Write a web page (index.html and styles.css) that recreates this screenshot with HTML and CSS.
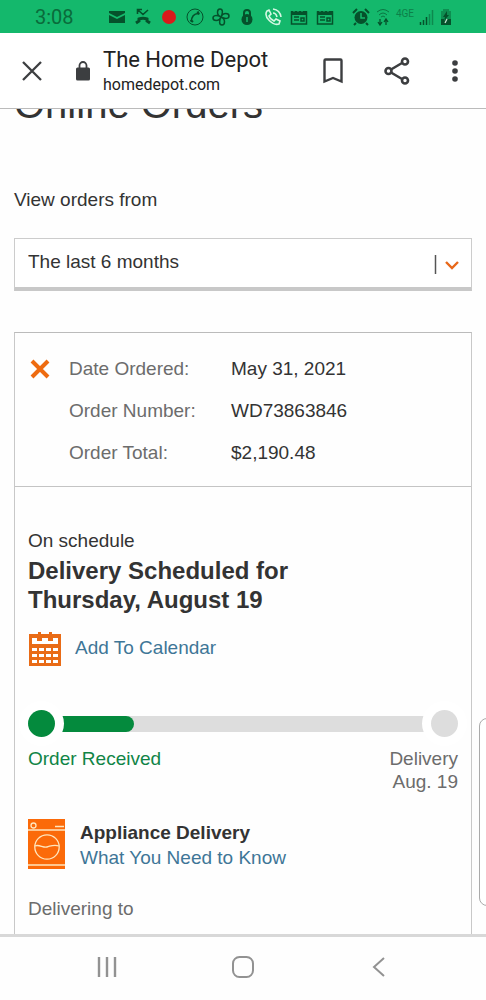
FILE: index.html
```html
<!DOCTYPE html>
<html lang="en">
<head>
<meta charset="utf-8">
<meta name="viewport" content="width=device-width, initial-scale=1">
<title>The Home Depot</title>
<link rel="stylesheet" href="styles.css">
</head>
<body>
<div class="phone">
  <div class="status">
    <time class="clock">3:08</time>
    <div class="tray">
      <svg width="18" height="18" viewBox="0 0 18 18"><path fill="currentColor" d="M1 3h16v2L9 9 1 5zM1 7l8 4 8-4v8H1z"/></svg>
      <svg width="18" height="18" viewBox="0 0 18 18" fill="none" stroke="currentColor"><path d="M14 2L9 6.500 4 2M3.500 6V1.500H8" stroke-width="1.600"/><path d="M2 15l3-2v-2q4-1.500 8 0v2l3 2" stroke-width="3"/></svg>
      <svg width="18" height="18" viewBox="0 0 18 18"><circle cx="9" cy="9" r="7" fill="#d91b1b"/></svg>
      <svg width="18" height="18" viewBox="0 0 18 18" fill="none" stroke="currentColor"><circle cx="9" cy="9" r="8"/><path d="M5.500 14C5 9 8 5 13 5.500" stroke-width="1.600"/><path d="M4.500 12l2.500 2M11.500 3.500l1.500 3" stroke-width="2.200"/></svg>
      <svg width="18" height="18" viewBox="0 0 18 18" fill="none" stroke="currentColor" stroke-width="1.500"><path d="M9 9C4 7 5 1 8 1s3 4 1 8M9 9c2-5 8-4 8-1s-4 3-8 1M9 9c5 2 4 8 1 8s-3-4-1-8M9 9c-2 5-8 4-8 1s4-3 8-1"/></svg>
      <svg width="18" height="18" viewBox="0 0 18 18"><path d="M6 9V5a3 3 0 0 1 6 0v4" fill="none" stroke="currentColor" stroke-width="2"/><circle cx="9" cy="11.500" r="5.500" fill="currentColor"/><path d="M9 9v5" stroke="#14b86c" stroke-width="1.500"/></svg>
      <svg class="call" width="18" height="18" viewBox="0 0 18 18" fill="none" stroke="currentColor" stroke-width="1.600"><path d="M3 3l2-1 2 4-2 2c1 3 3 4 5 5l2-2 4 2-1 3C9 18-1 9 3 3z"/><path d="M9 5q3 0 4 4M9 1q7 1 8 8"/></svg>
      <svg width="18" height="18" viewBox="0 0 18 18"><path fill="none" stroke="currentColor" stroke-width="1.500" d="M1.500 4h15v12h-15zM4 9h5M4 12h5M11 10h3v3h-3z"/><path fill="currentColor" d="M1 3h16v4H1z"/><path d="M4 2v2m4-2v2m4-2v2" stroke="#14b86c"/></svg>
      <svg width="18" height="18" viewBox="0 0 18 18"><path fill="none" stroke="currentColor" stroke-width="1.500" d="M1.500 4h15v12h-15zM4 9h5M4 12h5M11 10h3v3h-3z"/><path fill="currentColor" d="M1 3h16v4H1z"/><path d="M4 2v2m4-2v2m4-2v2" stroke="#14b86c"/></svg>
    </div>
    <div class="radio">
      <svg width="18" height="18" viewBox="0 0 18 18"><circle cx="9" cy="9.500" r="6.500" fill="currentColor"/><path d="M1 5l4-4m8 0l4 4M4 15l-2 2m12-2l2 2" stroke="currentColor" stroke-width="2"/><path d="M9 5v5h4" fill="none" stroke="#14b86c" stroke-width="1.500"/></svg>
      <svg width="16" height="18" viewBox="0 0 16 18" fill="none" stroke="currentColor"><path d="M2 4q6-5 12 0M4 7q4-4 8 0M6 9q2-2 4 0" opacity=".65"/><path d="M5 11v5M3 14l2 3 2-3M11 17v-5M9 14l2-3 2 3" stroke-width="1.300"/></svg>
      <span class="net">4GE</span>
      <svg width="15" height="18" viewBox="0 0 15 18"><path d="M1.500 17v-3m3 3v-5m3 5V9" stroke="currentColor" stroke-width="1.500"/><path d="M10.500 17V6m3 11V2" stroke="currentColor" stroke-width="1.500" opacity=".45"/></svg>
      <svg width="14" height="18" viewBox="0 0 14 18"><path fill="currentColor" opacity=".4" d="M4 1h6v2h2v14H2V3h2z"/><path fill="currentColor" d="M2 11h10v6H2zM8 3L4 9h2l-1 4 5-6H8z"/><path d="M8 11l-2 4" stroke="#c8e8d5" stroke-width="1.300"/></svg>
    </div>
  </div>

  <header class="bar">
    <button class="icon-btn close" aria-label="Close"><svg width="20" height="20" viewBox="0 0 20 20"><path d="M1 1l18 18M19 1L1 19" stroke="currentColor" stroke-width="2.300"/></svg></button>
    <svg class="lock" width="16" height="20" viewBox="0 0 16 20"><rect x="1" y="6.500" width="14" height="13" rx="1.500" fill="currentColor"/><path d="M4.500 8V4.500a3.500 3.500 0 0 1 7 0V8" fill="none" stroke="currentColor" stroke-width="1.800"/></svg>
    <div class="site">
      <div class="site-name">The Home Depot</div>
      <div class="site-host">homedepot.com</div>
    </div>
    <div class="actions">
      <button class="icon-btn" aria-label="Bookmark"><svg width="20" height="26" viewBox="0 0 20 26"><path d="M1.500 2.500q0-1 1-1h15q1 0 1 1v21L10 20l-8.500 3.500z" fill="none" stroke="currentColor" stroke-width="2.400"/></svg></button>
      <button class="icon-btn" aria-label="Share"><svg width="26" height="28" viewBox="0 0 26 28" fill="none" stroke="currentColor" stroke-width="2.600"><path d="M7 12.500l11-6.500M7 15.500l11 6.500"/><circle cx="4.500" cy="14" r="3"/><circle cx="21" cy="4.500" r="3"/><circle cx="21" cy="23.500" r="3"/></svg></button>
      <button class="icon-btn" aria-label="More"><svg width="8" height="24" viewBox="0 0 8 24" fill="currentColor"><circle cx="4" cy="4" r="2.800"/><circle cx="4" cy="12" r="2.800"/><circle cx="4" cy="20" r="2.800"/></svg></button>
    </div>
  </header>

  <main class="page">
    <h1 class="heading">Online Orders</h1>
    <label class="range-label" for="range">View orders from</label>
    <div class="select">
      <select id="range" class="select-box"><option>The last 6 months</option></select>
      <svg class="select-mark" width="26" height="20" viewBox="0 0 26 20" fill="none"><path d="M2.500 0v19" stroke="#555" stroke-width="1.500"/><path d="M13 7l6 6 6-6" stroke="#e8681a" stroke-width="2.400"/></svg>
    </div>

    <section class="card">
      <div class="summary">
        <button class="icon-btn collapse" aria-label="Collapse order"><svg width="20" height="20" viewBox="0 0 20 20"><path d="M2 2l16 16M18 2L2 18" stroke="currentColor" stroke-width="4"/></svg></button>
        <dl class="facts">
          <dt>Date Ordered:</dt><dd>May 31, 2021</dd>
          <dt>Order Number:</dt><dd>WD73863846</dd>
          <dt>Order Total:</dt><dd>$2,190.48</dd>
        </dl>
      </div>
      <div class="detail">
        <p class="state">On schedule</p>
        <h2 class="title">Delivery Scheduled for Thursday, August 19</h2>
        <a class="calendar" href="#calendar">
          <svg width="34" height="34" viewBox="0 0 34 34"><path fill="#e96b16" d="M1 2h9V0h3v2h8V0h3v2h9v32H1z"/><path fill="#fff" d="M4 6h5v3h5V6h6v3h5V6h5v6H4zM4 16h5v3H4zm7 0h5v3h-5zm7 0h5v3h-5zm7 0h5v3h-5zM4 22h5v3H4zm7 0h5v3h-5zm7 0h5v3h-5zm7 0h5v3h-5zM4 28h5v3H4zm7 0h5v3h-5zm7 0h5v3h-5zm7 0h5v3h-5z"/></svg>
          <span>Add To Calendar</span>
        </a>
        <div class="track" role="progressbar" aria-label="Delivery progress" aria-valuenow="20">
          <span class="dot dot-done"></span>
          <span class="rail"><span class="fill"></span></span>
          <span class="dot"></span>
        </div>
        <div class="stops">
          <span class="stop-done">Order Received</span>
          <span class="stop-next">Delivery<br>Aug. 19</span>
        </div>
        <div class="appliance">
          <svg width="37" height="50" viewBox="0 0 37 50"><path fill="#fb6a09" d="M0 0h37v50H0z"/><g fill="none" stroke="#ffe6bd" stroke-width="1.300"><path d="M0 11h37M0 46h37M27 7.500h9M7 27c4-2 8 2 12 1s7-3 12-1"/><circle cx="5.500" cy="6.500" r="2.500"/><circle cx="19" cy="28" r="12.200"/></g></svg>
          <div>
            <h3 class="appliance-name">Appliance Delivery</h3>
            <a class="link" href="#know">What You Need to Know</a>
          </div>
        </div>
        <p class="dest">Delivering to</p>
      </div>
    </section>
    <div class="edge"></div>
  </main>

  <nav class="keys">
    <button class="icon-btn" aria-label="Recent apps"><svg width="22" height="22" viewBox="0 0 22 22"><path d="M3 1v20M11 1v20M19 1v20" stroke="currentColor" stroke-width="2.400"/></svg></button>
    <button class="icon-btn" aria-label="Home"><svg width="24" height="24" viewBox="0 0 24 24"><rect x="2" y="2" width="20" height="20" rx="6.500" fill="none" stroke="currentColor" stroke-width="2"/></svg></button>
    <button class="icon-btn" aria-label="Back"><svg width="22" height="22" viewBox="0 0 22 22"><path d="M16 2L6 11l10 9" fill="none" stroke="currentColor" stroke-width="2"/></svg></button>
  </nav>
</div>
</body>
</html>
```
FILE: styles.css
```css
* { box-sizing: border-box; }
body {
  margin: 0;
  background: #fefefe;
  color: #333;
  font: 19px/24px "Liberation Sans", Arial, sans-serif;
}
h1, h2, h3, p, dl, dd { margin: 0; }
svg { display: block; flex: none; }
.phone { display: flex; flex-direction: column; height: 100vh; }

.status {
  display: flex;
  align-items: center;
  height: 33px;
  padding: 0 33px 0 35px;
  background: #14b86c;
  color: #05512b;
}
.clock { width: 73px; font: 20px/24px Roboto, sans-serif; color: #0a6b3b; }
.tray { display: flex; gap: 8px; }
.call { color: #d5f7e3; }
.radio { display: flex; align-items: center; gap: 5px; margin-left: auto; }
.net { align-self: flex-start; font: 10px/12px Roboto, sans-serif; color: #0c8049; }

.icon-btn {
  display: flex;
  padding: 0;
  border: 0;
  background: none;
  color: #3c3e40;
}
.bar {
  display: flex;
  align-items: center;
  height: 76px;
  padding: 0 27px 0 22px;
  border-bottom: 1px solid #bbb;
  background: #fff;
  font-family: Roboto, sans-serif;
  color: #222;
}
.close { margin-right: 33px; }
.lock { margin-right: 12px; color: #3c3e40; }
.site-name { font-size: 22px; line-height: 28px; }
.site-host { font-size: 16px; line-height: 22px; }
.actions { display: flex; align-items: center; gap: 41px; margin-left: auto; }

.page {
  position: relative;
  flex: 1;
  min-height: 0;
  overflow: hidden;
  padding: 0 14px;
}
.heading { margin-top: -29px; font-size: 40px; font-weight: 400; line-height: 48px; }
.range-label { display: block; margin-top: 60px; }
.select { display: grid; align-items: center; margin-top: 26px; }
.select-box {
  grid-area: 1 / 1;
  width: 100%;
  height: 53px;
  padding: 0 13px 2px;
  border: 1px solid #ccc;
  border-bottom: 4px solid #c8c8c8;
  border-radius: 0;
  appearance: none;
  background: #fff;
  color: inherit;
  font: inherit;
}
.select-mark { grid-area: 1 / 1; justify-self: end; margin-right: 13px; pointer-events: none; }

.card { margin-top: 41px; border: 1px solid #c8c8c8; border-top-color: #bbb; }
.summary {
  display: flex;
  align-items: flex-start;
  gap: 19px;
  padding: 24px 15px 21px;
  border-bottom: 1px solid #c4c4c4;
}
.collapse { padding-top: 2px; color: #ee6b10; }
.facts { display: grid; grid-template-columns: 162px 1fr; row-gap: 18px; flex: 1; }
.facts dt { color: #6c6c6c; }

.detail { padding: 42px 13px 0; }
.title { max-width: 300px; margin-top: 3px; font-size: 24px; line-height: 29px; }
.calendar {
  display: flex;
  gap: 13px;
  width: max-content;
  margin-top: 18px;
  color: #3e7697;
  text-decoration: none;
}
.calendar span { margin-top: 4px; }
.track { display: flex; align-items: center; margin-top: 44px; }
.dot {
  position: relative;
  width: 27px;
  height: 27px;
  border-radius: 50%;
  background: #ddd;
  box-shadow: 0 0 0 9px #fff;
}
.dot-done { background: #048a3d; }
.rail { flex: 1; height: 16px; background: #ddd; }
.fill { display: block; width: 21%; height: 100%; border-radius: 0 8px 8px 0; background: #048a3d; }
.stops { display: flex; justify-content: space-between; margin-top: 10px; line-height: 23px; color: #6c6c6c; }
.stop-done { color: #108446; }
.stop-next { text-align: right; }
.appliance { display: flex; gap: 15px; margin-top: 26px; line-height: 25px; }
.appliance-name { padding-top: 1px; font-size: 19px; line-height: 25px; }
.link { color: #3e7697; text-decoration: none; }
.dest { margin: 27px 0 24px; color: #6c6c6c; }

.edge {
  position: absolute;
  top: 609px;
  right: -10px;
  width: 17px;
  height: 188px;
  border: 1px solid #aaa;
  border-radius: 8px;
  background: #fff;
}

.keys {
  display: flex;
  align-items: center;
  justify-content: center;
  gap: 14%;
  height: 66px;
  padding-bottom: 3px;
  border-top: 3px solid #d8d8d8;
}
.keys .icon-btn { justify-content: center; width: 68px; color: #929292; }
```
